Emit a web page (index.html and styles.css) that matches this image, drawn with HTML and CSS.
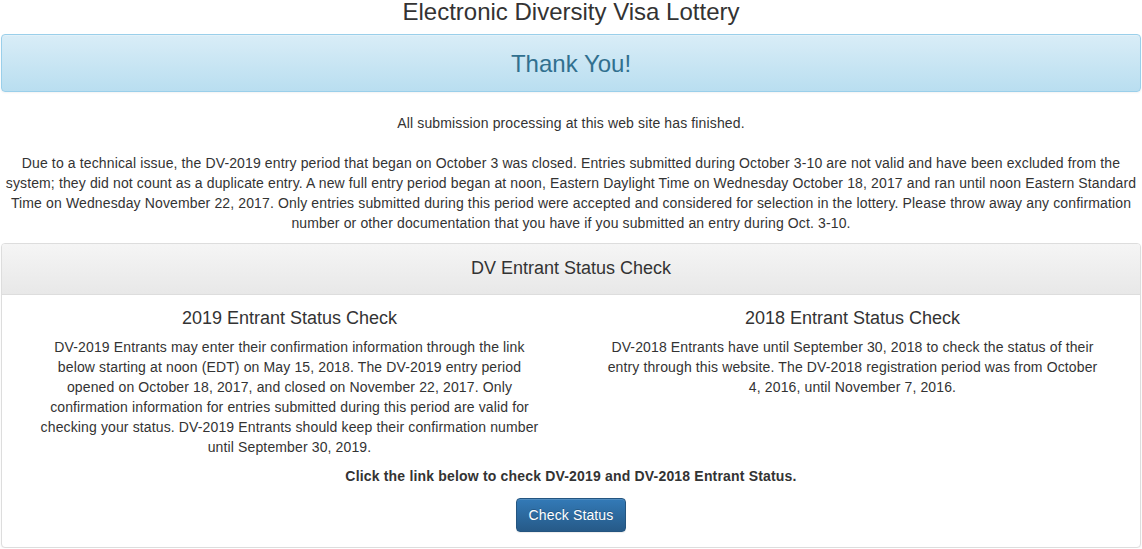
FILE: index.html
```html
<!DOCTYPE html>
<html lang="en">
<head>
<meta charset="utf-8">
<title>Electronic Diversity Visa Lottery</title>
<link rel="stylesheet" href="styles.css">
</head>
<body>
<div class="container">
  <h1 class="page-title">Electronic Diversity Visa Lottery</h1>
  <div class="alert-info">
    <h2 class="alert-title">Thank You!</h2>
  </div>
  <p class="lead-line">All submission processing at this web site has finished.</p>
  <p class="notice">Due to a technical issue, the DV-2019 entry period that began on October 3 was closed. Entries submitted during October 3-10 are not valid and have been excluded from the system; they did not count as a duplicate entry. A new full entry period began at noon, Eastern Daylight Time on Wednesday October 18, 2017 and ran until noon Eastern Standard Time on Wednesday November 22, 2017. Only entries submitted during this period were accepted and considered for selection in the lottery. Please throw away any confirmation number or other documentation that you have if you submitted an entry during Oct. 3-10.</p>
  <div class="panel">
    <div class="panel-heading">
      <h3 class="panel-title">DV Entrant Status Check</h3>
    </div>
    <div class="panel-body">
      <div class="cols">
        <div class="col">
          <h3 class="col-title">2019 Entrant Status Check</h3>
          <p class="col-text">DV-2019 Entrants may enter their confirmation information through the link below starting at noon (EDT) on May 15, 2018. The DV-2019 entry period opened on October 18, 2017, and closed on November 22, 2017. Only confirmation information for entries submitted during this period are valid for checking your status. DV-2019 Entrants should keep their confirmation number until September 30, 2019.</p>
        </div>
        <div class="col">
          <h3 class="col-title">2018 Entrant Status Check</h3>
          <p class="col-text">DV-2018 Entrants have until September 30, 2018 to check the status of their entry through this website. The DV-2018 registration period was from October 4, 2016, until November 7, 2016.</p>
        </div>
      </div>
      <p class="cta">Click the link below to check DV-2019 and DV-2018 Entrant Status.</p>
      <div class="btn-row">
        <button class="btn-primary" type="button">Check Status</button>
      </div>
    </div>
  </div>
</div>
</body>
</html>
```

FILE: styles.css
```css
* { box-sizing: border-box; }
html, body {
  margin: 0;
  padding: 0;
  background: #fff;
}
body {
  font-family: "Liberation Sans", Arial, Helvetica, sans-serif;
  font-size: 14px;
  line-height: 20px;
  color: #333;
  letter-spacing: 0.13px;
}
.container {
  width: 1140px;
  margin: 0 auto;
  text-align: center;
}
.page-title {
  margin: 0 0 10px;
  font-size: 24px;
  line-height: 24px;
  font-weight: 400;
  letter-spacing: 0;
  color: #333;
}
.alert-info {
  border: 1px solid #9acfea;
  border-radius: 4px;
  background: linear-gradient(to bottom, #d9edf7 0%, #b9def0 100%);
  box-shadow: inset 0 1px 0 rgba(255,255,255,.25), 0 1px 2px rgba(0,0,0,.05);
  padding: 16px 15px 15px;
  margin-bottom: 21px;
}
.alert-title {
  margin: 0;
  font-size: 24px;
  line-height: 25px;
  font-weight: 400;
  letter-spacing: 0;
  color: #31708f;
}
.lead-line {
  margin: 0 0 20px;
}
.notice {
  margin: 0 0 10px;
}
.panel {
  border: 1px solid #ddd;
  border-radius: 4px;
  box-shadow: 0 1px 2px rgba(0,0,0,.05);
  background: #fff;
}
.panel-heading {
  padding: 14px 15px 16px;
  border-bottom: 1px solid #ddd;
  border-radius: 3px 3px 0 0;
  background: linear-gradient(to bottom, #f5f5f5 0%, #e8e8e8 100%);
}
.panel-title {
  margin: 0;
  font-size: 18px;
  line-height: 20px;
  font-weight: 400;
  letter-spacing: 0;
  color: #333;
}
.panel-body {
  padding: 13px 15px 15px;
}
.cols {
  display: grid;
  grid-template-columns: 1fr 1fr;
  column-gap: 18px;
}
.col {
  padding: 0 20px;
}
.col-title {
  margin: 0 0 9px;
  font-size: 18px;
  line-height: 20px;
  font-weight: 400;
  letter-spacing: 0;
  color: #333;
}
.col-text {
  margin: 0;
}
.cta {
  margin: 9px 0 12px;
  font-weight: 700;
  letter-spacing: 0.18px;
}
.btn-row {
  display: flex;
  justify-content: center;
}
.btn-primary {
  height: 34px;
  padding: 6px 12px;
  font-family: inherit;
  font-size: 14px;
  line-height: 20px;
  letter-spacing: 0.13px;
  color: #fff;
  border: 1px solid #245580;
  border-radius: 4px;
  background: linear-gradient(to bottom, #337ab7 0%, #265a88 100%);
  box-shadow: inset 0 1px 0 rgba(255,255,255,.15), 0 1px 1px rgba(0,0,0,.075);
  text-shadow: 0 -1px 0 rgba(0,0,0,.2);
  cursor: pointer;
}
```
